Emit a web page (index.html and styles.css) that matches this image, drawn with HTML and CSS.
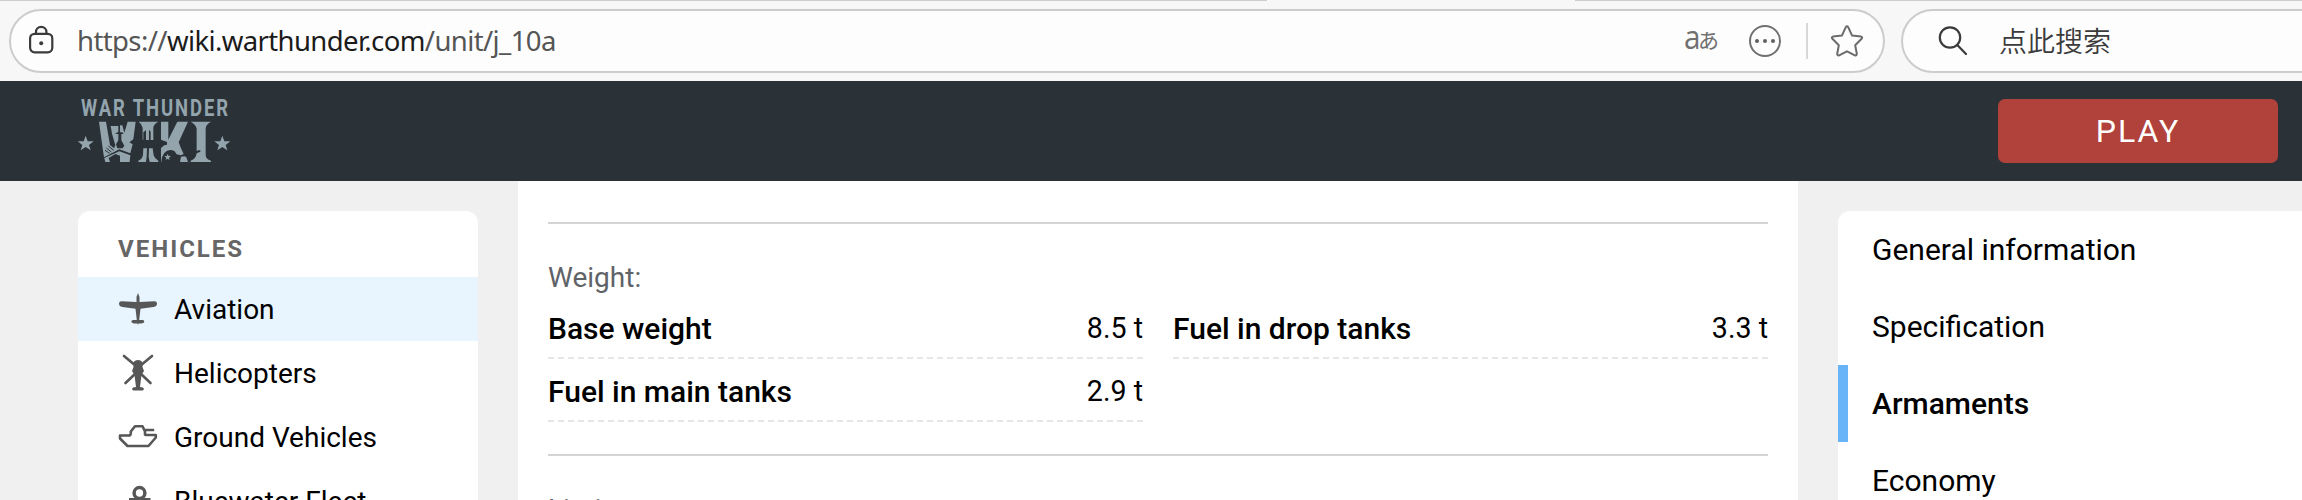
FILE: index.html
```html
<!DOCTYPE html>
<html lang="en">
<head>
<meta charset="utf-8">
<title>War Thunder Wiki</title>
<link rel="stylesheet" href="styles.css">
</head>
<body>
<div class="tabs"><span class="tab-edge before"></span><span class="tab-edge after"></span></div>
<div class="toolbar">
  <div class="address">
    <svg class="lock" width="26" height="34" viewBox="0 0 26 34" fill="none" stroke="#3b3b3b" stroke-width="2.2"><rect x="2.100" y="9.800" width="22.200" height="18.500" rx="4.500"/><path d="M8 9.500V8a5.200 5.200 0 0 1 10.400 0V9.500"/><circle cx="13.200" cy="19.200" r="2" fill="#3b3b3b" stroke="none"/></svg>
    <div class="url">https://<span class="host">wiki.warthunder.com</span>/unit/j_10a</div>
    <div class="translate"><span class="latin">a</span><span class="kana">あ</span></div>
    <svg class="more" width="34" height="34" viewBox="0 0 34 34"><circle cx="17" cy="17" r="15" fill="none" stroke="#707070" stroke-width="2"/><g fill="#606060"><circle cx="9" cy="17" r="2"/><circle cx="17" cy="17" r="2"/><circle cx="25" cy="17" r="2"/></g></svg>
    <span class="divider"></span>
    <svg class="fav" width="34" height="34" viewBox="0 0 34 34" fill="none" stroke="#6b6b6b" stroke-width="2" stroke-linejoin="round"><path d="M15.800 3.200Q17 1.200 18.200 3.200L22.100 11.600L31 12.600Q33 13.200 31.600 14.800L25.200 21.300L26.800 29.800Q26.800 32 24.900 31.300L17 27.300L9.100 31.300Q7.200 32 7.200 29.800L8.800 21.300L2.400 14.800Q1 13.200 3 12.600L11.900 11.600Z"/></svg>
  </div>
  <div class="search">
    <svg width="32" height="34" viewBox="0 0 32 34" fill="none" stroke="#3b3b3b" stroke-width="2.200" stroke-linecap="round"><circle cx="12" cy="13.500" r="10.200"/><path d="M19.300 21L28 30"/></svg>
    <span>点此搜索</span>
  </div>
</div>
<header class="header">
  <svg class="logo" width="154" height="68" viewBox="0 0 154 68" fill="#94a4ad">
    <text class="logo-name" transform="translate(3 18.700) scale(.77 1)" textLength="191">WAR THUNDER</text>
    <g transform="translate(-18 -12) scale(.3333)">
      <path d="M77 152L83 169L101 169L87 180L92 196L77 186L62 196L67 180L53 169L71 169Z"/>
      <path d="M487 152L493 169L511 169L497 180L502 196L487 186L472 196L477 180L463 169L481 169Z"/>
      <path d="M117 110H138L150 180L162 190L166 181L156 146L152 123H175V140L165 147H175V166L168 178L172 190H188L193 182L184 166V147H191L187 142H180V121H187L193 143L203 110H227L220 163L208 172L218 178L211 205L178 193L132 217L128 190Z"/>
      <path d="M133 219L178 199L211 211L209 231H180V212L166 207L146 219L150 231H136Z"/>
      <path d="M236 110H295Q281 117 280 128V165H272V140L267 134V165H259L258 165V136L250 142V164H248V128Q246 117 236 110Z"/>
      <path d="M250 190H261L260 215L258 231H235V227Q247 222 249 210ZM267 190H278L281 211Q284 222 295 227V231H269L266 215Z"/>
      <path d="M303 110H325V164L352 110H384L356 172L363 190L371 207L363 211L350 208L343 198Q325 190 313 204L306 217L304 231H303V189L313 181L321 179V171L303 164Z"/>
      <path d="M363 215L374 214L379 217L384 231H360Z"/>
      <path d="M323 207L326 213H333L327 218L329 225L323 221L317 225L319 218L313 213H320Z"/>
      <path d="M392 110H453Q437 119 437 131V209Q437 222 453 227V231H392V227Q408 222 410 205L421 200V195L410 197V131Q408 119 392 110Z"/>
      <path d="M145 183L161 196M139 189L154 201M135 196L149 205" fill="none" stroke="#2a3238" stroke-width="3"/>
    </g>
  </svg>
  <button class="play">PLAY</button>
</header>
<div class="page">
  <nav class="vehicles">
    <h2>VEHICLES</h2>
    <a class="vehicle active"><svg width="40" height="40" viewBox="0 0 40 40" fill="#575757"><path d="M20 4L21.500 8V13L36.500 12.200Q39 12.200 39 14.500Q39 17.500 35.500 18L22.500 19.800L21.200 31H25Q26.500 31.500 26.300 33Q26 34.400 23 34.400H20.500L20 36L19.500 34.400H16Q13.300 34 13.300 32.500Q13.300 31 15.200 31H18.800L17.500 19.800L4.500 18Q1 17.500 1 14.500Q1 12.200 3.500 12.200L18.500 13V8Z"/></svg>Aviation</a>
    <a class="vehicle"><svg width="40" height="40" viewBox="0 0 40 40" fill="#575757"><path d="M6 3L18 13M34 3L22 13M7.500 30L17 21M32.500 30L23 21" stroke="#575757" stroke-width="2.600" stroke-linecap="round"/><path d="M15.500 9.500Q16.500 7 20 7Q23.500 7 24.500 9.500V14L26 18L23.500 22L22 34L25 34.500Q27 36.500 24.500 37.500H15.500Q13 36.500 15 34.500L18 34L16.500 22L14 18L15.500 14Z"/></svg>Helicopters</a>
    <a class="vehicle"><svg width="40" height="40" viewBox="0 0 40 40" fill="none" stroke="#575757" stroke-width="2.600" stroke-linejoin="round"><path d="M12.800 17V14.500L17 9.200H24.500L27 14.500V17.500L28 18H37.800V20.500L30.500 29H9.500L2 21.500V18.500H10.500Q12.500 18.500 12.800 17M26 13H36.200"/></svg>Ground Vehicles</a>
    <a class="vehicle"><svg width="40" height="40" viewBox="0 0 40 40" fill="none" stroke="#575757"><circle cx="21.500" cy="12" r="5.400" stroke-width="3.500"/><path d="M11 19H32.500" stroke-width="4"/><path d="M21.500 17V36" stroke-width="4"/></svg>Bluewater Fleet</a>
  </nav>
  <main class="content">
    <section class="group">
      <h3>Weight:</h3>
      <div class="stats">
        <div class="stat"><b>Base weight</b><span>8.5 t</span></div>
        <div class="stat"><b>Fuel in drop tanks</b><span>3.3 t</span></div>
        <div class="stat"><b>Fuel in main tanks</b><span>2.9 t</span></div>
      </div>
    </section>
    <section class="group">
      <h3>Limits:</h3>
    </section>
  </main>
  <aside class="toc">
    <a>General information</a>
    <a>Specification</a>
    <a class="current">Armaments</a>
    <a>Economy</a>
  </aside>
</div>
</body>
</html>
```
FILE: styles.css
```css
* { box-sizing: border-box; }
body { margin: 0; width: 2302px; height: 500px; overflow: hidden; background: #f0f0f0; font-family: Roboto, sans-serif; color: #000; display: flex; flex-direction: column; }
.tabs { height: 1px; flex: none; display: flex; justify-content: space-between; background: #f7f7f7; }
.tab-edge { height: 1px; background: #ccc; }
.before { width: 1267px; }
.after { width: 727px; }
.toolbar { height: 80px; flex: none; background: #f7f7f7; padding: 8px 0 0 9px; display: flex; gap: 16px; align-items: flex-start; overflow: hidden; }
.address, .search { height: 64px; border: 2px solid #ccc; border-radius: 32px; background: #fdfdfd; display: flex; align-items: center; flex: none; }
.address { width: 1876px; padding: 0 19px 0 17px; }
.search { width: 460px; padding-left: 35px; gap: 29px; font-size: 28px; color: #3b3b3b; }
.search span { font-family: "Noto Sans CJK SC", sans-serif; font-weight: 350; margin-top: -2px; }
.url { margin: -2px 0 0 23px; font-family: "Noto Sans", "Open Sans", sans-serif; font-size: 27.500px; letter-spacing: -.61px; color: #555; flex: 1; white-space: nowrap; }
.host { color: #1b1b1b; }
.translate { display: flex; align-items: center; color: #707070; height: 34px; margin-right: 29px; }
.latin { font-family: "Open Sans", sans-serif; font-size: 33px; line-height: 34px; margin: -8px -3px 0 0; transform: scaleX(.9); }
.kana { font-family: "Noto Sans CJK JP", sans-serif; font-size: 21px; line-height: 34px; margin-top: -4px; }
.divider { width: 2px; height: 36px; background: #d8d8d8; margin: 0 22px 0 24px; }
.header { height: 100px; flex: none; background: #2a3238; padding: 0 24px 0 78px; display: flex; align-items: center; justify-content: space-between; }
.logo-name { font: 700 24px Roboto, sans-serif; }
.play { width: 280px; height: 64px; border: 0; border-radius: 7px; background: #b0413b; color: #fff; font: 400 32px Roboto, sans-serif; letter-spacing: 2px; }
.page { flex: 1; min-height: 0; display: flex; align-items: flex-start; padding-left: 78px; overflow: hidden; }
.vehicles { width: 400px; height: 289px; margin: 30px 40px 0 0; background: #fff; border-radius: 12px 12px 0 0; flex: none; overflow: hidden; }
.vehicles h2 { margin: 0; height: 66px; padding: 10px 0 0 40px; font-size: 24px; line-height: 56px; letter-spacing: 2px; color: #666; }
.vehicle { height: 64px; padding-left: 40px; display: flex; align-items: center; gap: 16px; font-size: 28px; white-space: nowrap; }
.active { background: #e8f5fe; }
.content { width: 1280px; height: 319px; background: #fff; padding: 41px 30px 0; flex: none; overflow: hidden; }
.group { border-top: 2px solid #d4d4d4; height: 232px; padding-top: 36px; }
.group h3 { margin: 0; font-weight: 400; font-size: 28px; line-height: 36px; color: #5f6368; }
.stats { display: grid; grid-template-columns: 595px 595px; column-gap: 30px; }
.stat { height: 63px; background: repeating-linear-gradient(90deg, #e6e6e6 0 6px, #fff 6px 9.980px) bottom / 100% 2px no-repeat; display: flex; justify-content: space-between; font-size: 28.600px; line-height: 65px; }
.stat b { font-weight: 500; font-size: 30px; }
.toc { flex: 1; height: 289px; margin: 30px 0 0 40px; background: #fff; border-radius: 12px 0 0 0; overflow: hidden; }
.toc a { display: block; height: 77px; padding-left: 34px; font-size: 30px; line-height: 77px; }
.toc .current { border-left: 10px solid #69b3f8; padding-left: 24px; font-weight: 500; }
```
